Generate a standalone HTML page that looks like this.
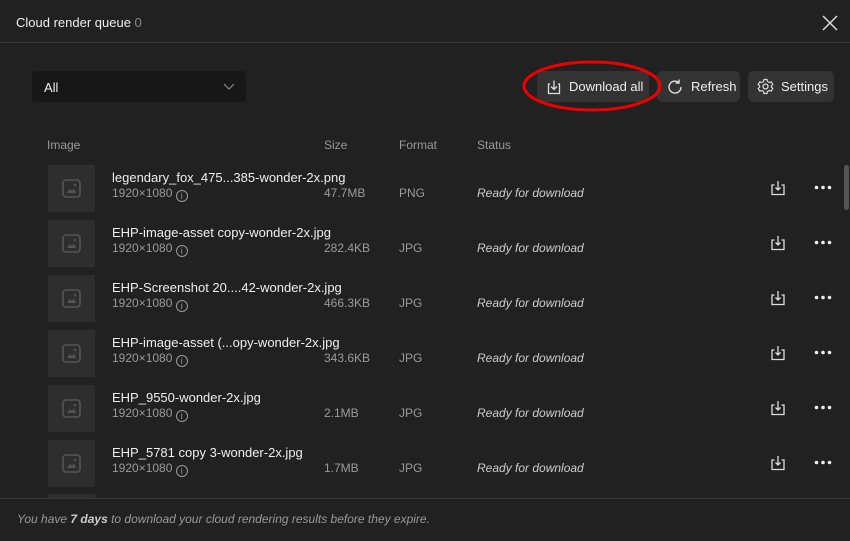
<!DOCTYPE html>
<html><head><style>
*{margin:0;padding:0;box-sizing:border-box}
body{width:850px;height:541px;background:#212121;font-family:"Liberation Sans",sans-serif;color:#e6e6e6;position:relative;overflow:hidden}
.a{position:absolute}
.hdr{left:0;top:0;width:850px;height:43px;border-bottom:1px solid #3a3a3a}
.btn{position:absolute;top:71px;height:31px;background:#333;border-radius:5px;font-size:13px;color:#eee;display:flex;align-items:center;gap:7px;padding-left:9px}
.th{font-size:12px;color:#999;top:138px}
.thumb{position:absolute;left:48px;width:47px;height:47px;background:#2e2e2e}
.name{position:absolute;left:112px;font-size:13px;color:#eee}
.dim{position:absolute;left:112px;font-size:12px;color:#9a9a9a}
.sz{position:absolute;left:324px;font-size:12px;color:#9a9a9a}
.fm{position:absolute;left:399px;font-size:12px;color:#9a9a9a}
.st{position:absolute;left:477px;font-size:12px;color:#ccc;font-style:italic}
</style></head><body>
<div class="a hdr"></div>
<div class="a" style="left:16px;top:15px;font-size:13px;color:#eee">Cloud render queue <span style="color:#888">0</span></div>
<svg class="a" style="left:822px;top:15px" width="16" height="16"><path d="M1 1L15 15M15 1L1 15" stroke="#ddd" stroke-width="1.5"/></svg>
<div class="a" style="left:32px;top:71px;width:214px;height:31px;background:#171717;border-radius:4px"></div>
<div class="a" style="left:44px;top:80px;font-size:13px;color:#eee">All</div>
<svg class="a" style="left:223px;top:83px" width="12" height="8"><path d="M1 1L6 6L11 1" stroke="#888" fill="none" stroke-width="1.2"/></svg>
<div class="btn" style="left:537px;width:112px"><svg width="16" height="16"><path d="M4 5H2.5V14.5H13.5V5H12M8 1.5V10M5 7.5L8 10.5L11 7.5" stroke="#ddd" fill="none" stroke-width="1.3"/></svg>Download all</div>
<div class="btn" style="left:657px;width:83px"><svg width="18" height="18"><path d="M15 9A6 6 0 1 1 12.5 4.2M13 1.5V5H9.5" stroke="#ddd" fill="none" stroke-width="1.4"/></svg>Refresh</div>
<div class="btn" style="left:748px;width:86px"><svg width="17" height="17"><circle cx="8.5" cy="8.5" r="2.5" stroke="#ddd" fill="none" stroke-width="1.3"/><path d="M7 1.5H10L10.5 3.5L12.3 4.5L14.3 3.9L15.8 6.5L14.3 8L14.3 9L15.8 10.5L14.3 13.1L12.3 12.5L10.5 13.5L10 15.5H7L6.5 13.5L4.7 12.5L2.7 13.1L1.2 10.5L2.7 9V8L1.2 6.5L2.7 3.9L4.7 4.5L6.5 3.5Z" stroke="#ddd" fill="none" stroke-width="1.2"/></svg>Settings</div>
<svg class="a" style="left:522px;top:60px" width="140" height="52"><ellipse cx="70" cy="26" rx="68" ry="24" stroke="#e00" stroke-width="3" fill="none"/></svg>
<div class="a th" style="left:47px">Image</div>
<div class="a th" style="left:324px">Size</div>
<div class="a th" style="left:399px">Format</div>
<div class="a th" style="left:477px">Status</div>
<div class="a" style="left:844px;top:165px;width:5px;height:45px;background:#555;border-radius:3px"></div>
<div id="rows"></div>
<div class="thumb" style="top:494px;height:5px"></div>
<div class="a" style="left:0;top:498px;width:850px;height:43px;border-top:1px solid #3a3a3a;background:#212121"></div>
<div class="a" style="left:17px;top:512px;font-size:12px;color:#999;font-style:italic">You have <b style="color:#ccc">7 days</b> to download your cloud rendering results before they expire.</div>
<script>
var d=[["legendary_fox_475...385-wonder-2x.png","47.7MB","PNG"],["EHP-image-asset copy-wonder-2x.jpg","282.4KB","JPG"],["EHP-Screenshot 20....42-wonder-2x.jpg","466.3KB","JPG"],["EHP-image-asset (...opy-wonder-2x.jpg","343.6KB","JPG"],["EHP_9550-wonder-2x.jpg","2.1MB","JPG"],["EHP_5781 copy 3-wonder-2x.jpg","1.7MB","JPG"]];
var h="";d.forEach(function(r,i){var y=165+55*i;
h+='<div class="thumb" style="top:'+y+'px"><svg style="position:absolute;left:14px;top:14px" width="19" height="19"><rect x="1" y="1" width="17" height="17" rx="3" stroke="#555" stroke-width="1.6" fill="none"/><path d="M5 14L8 10L10 12L12 9.5L14 14Z" fill="#555"/><circle cx="13" cy="6" r="1.2" fill="#555"/></svg></div>';
h+='<div class="name" style="top:'+(y+5)+'px">'+r[0]+'</div>';
h+='<div class="dim" style="top:'+(y+21)+'px">1920×1080 <span style="display:inline-block;width:12px;height:12px;border:1px solid #999;border-radius:50%;font-size:9px;text-align:center;line-height:11px;vertical-align:-2px">i</span></div>';
h+='<div class="sz" style="top:'+(y+21)+'px">'+r[1]+'</div><div class="fm" style="top:'+(y+21)+'px">'+r[2]+'</div><div class="st" style="top:'+(y+21)+'px">Ready for download</div>';
h+='<svg style="position:absolute;left:771px;top:'+(y+15)+'px" width="14" height="16"><path d="M3.5 5H1V14.5H13V5H10.5M7 1V10M4.5 7.5L7 10L9.5 7.5" stroke="#ddd" fill="none" stroke-width="1.3"/></svg>';
h+='<svg style="position:absolute;left:814px;top:'+(y+20)+'px" width="18" height="5"><circle cx="2.5" cy="2.5" r="1.8" fill="#eee"/><circle cx="9" cy="2.5" r="1.8" fill="#eee"/><circle cx="15.5" cy="2.5" r="1.8" fill="#eee"/></svg>';});
document.getElementById("rows").innerHTML=h;
</script>
</body></html>
